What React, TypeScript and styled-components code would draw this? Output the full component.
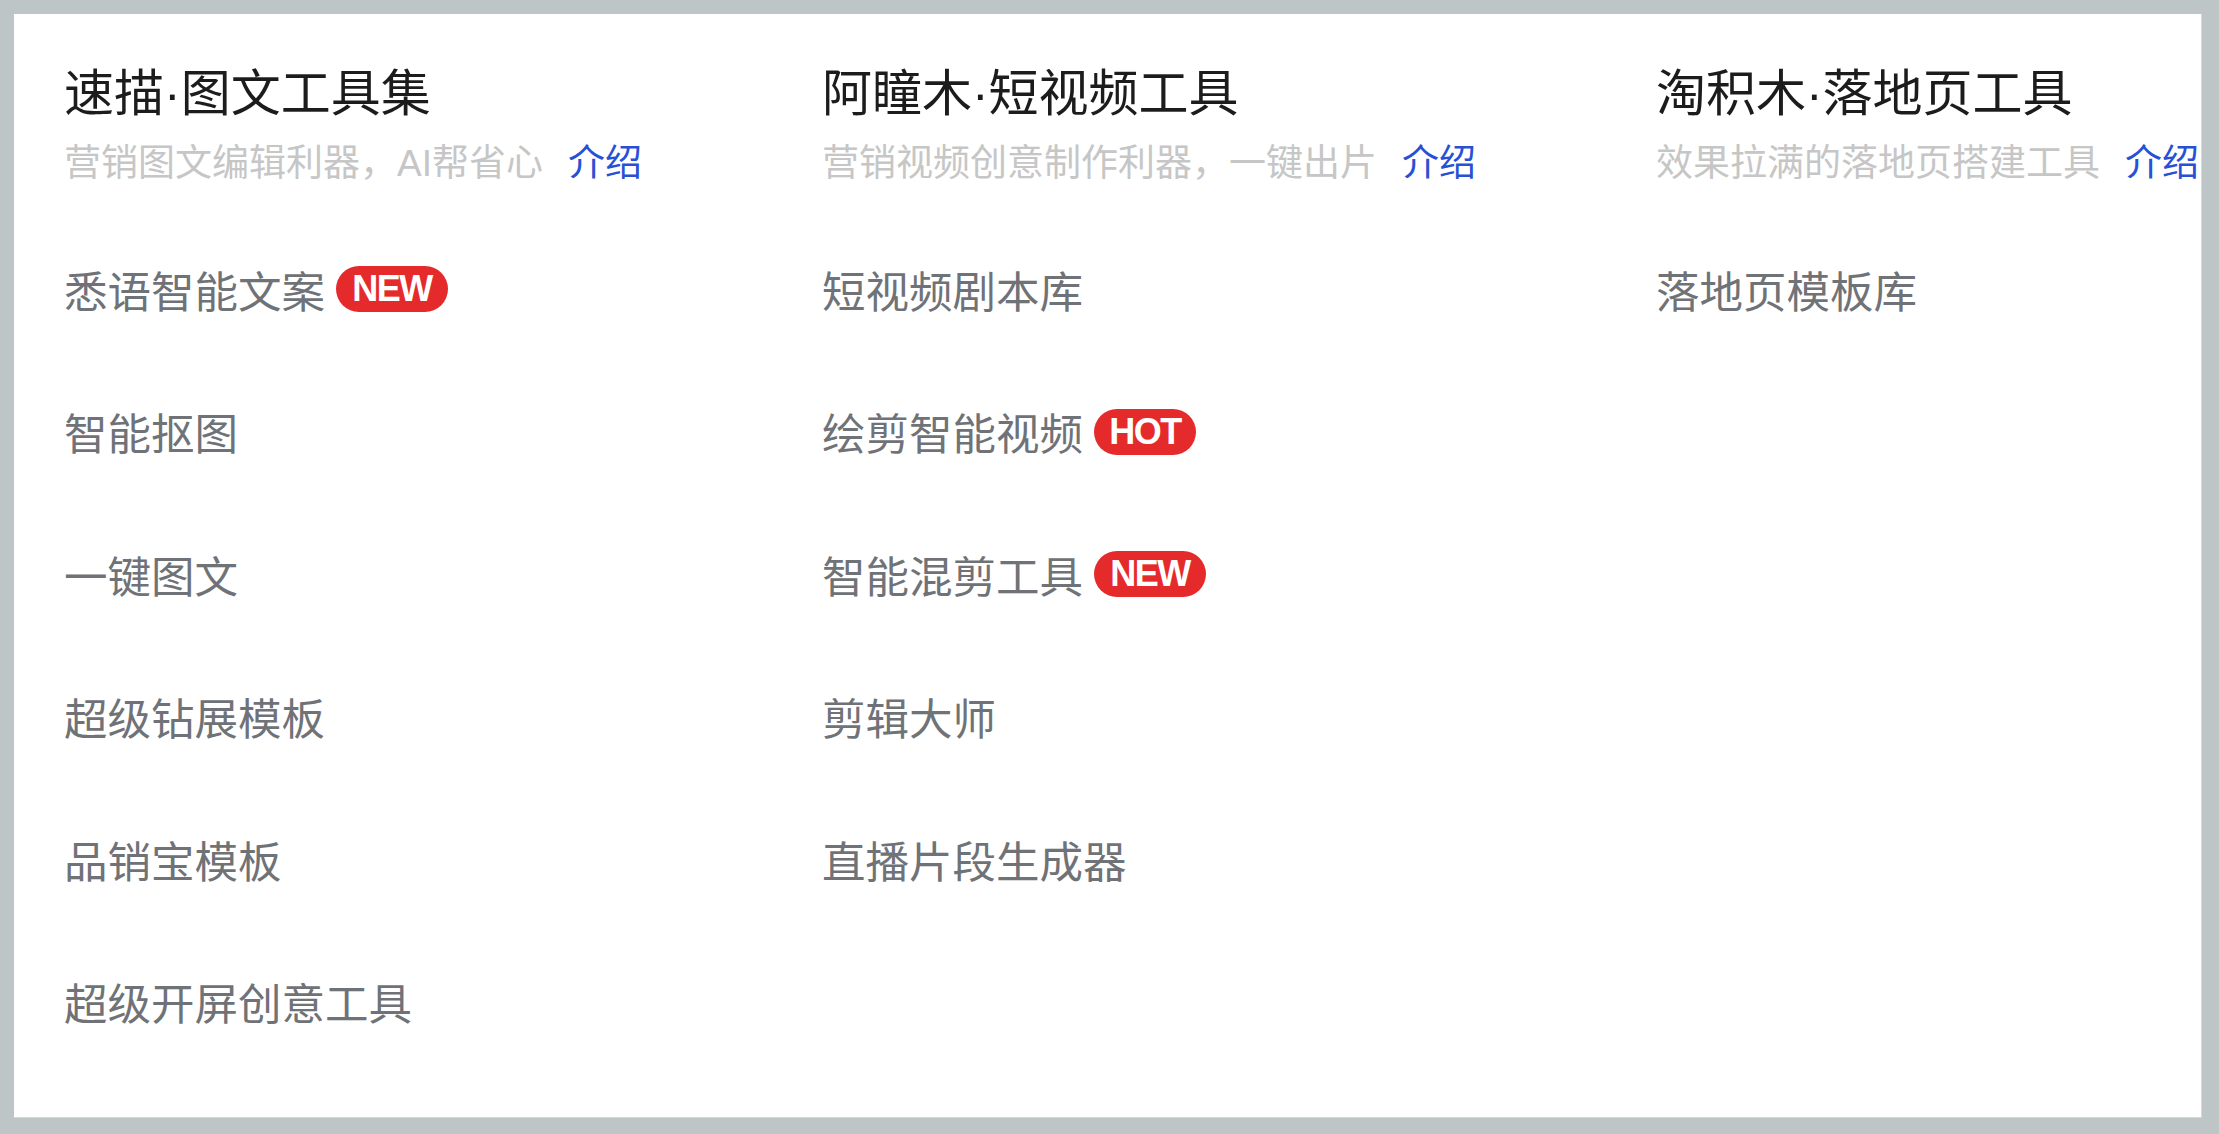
import React from "react";
import styled, { createGlobalStyle } from "styled-components";

const GlobalStyle = createGlobalStyle`
  html, body {
    margin: 0;
    padding: 0;
    background-color: #bec5c7;
  }
  * {
    box-sizing: border-box;
  }
`;

const PageWrapper = styled.div`
  width: 2219px;
  height: 1134px;
  padding: 14px 17px 16px 14px;
`;

const Panel = styled.div`
  width: 100%;
  height: 100%;
  background-color: #fff;
  border-right: 1px solid #d6d8d9;
  border-bottom: 1px solid #d6d8d9;
  overflow: hidden;
  display: flex;
  gap: 180px;
  padding: 50px 0 0 50px;
  font-family: "Liberation Sans", "Noto Sans CJK SC", sans-serif;
`;

const Column = styled.div`
  display: flex;
  flex-direction: column;
  flex-shrink: 0;
  white-space: nowrap;
`;

const Title = styled.div`
  font-size: 50px;
  line-height: 60px;
  color: #1c1c1c;
`;

const SubLine = styled.div`
  display: flex;
  align-items: center;
  margin-top: 11px;
  height: 50px;
`;

const SubText = styled.span`
  font-size: 37px;
  color: #c6c6c6;
`;

const IntroLink = styled.a`
  margin-left: 25px;
  font-size: 37px;
  color: #2750d6;
  text-decoration: none;
  cursor: pointer;
`;

const ItemList = styled.div`
  display: flex;
  flex-direction: column;
  margin-top: 33px;
`;

const Item = styled.div`
  display: flex;
  align-items: center;
  height: 142.5px;
  font-size: 43.5px;
  color: #6f7277;
  cursor: pointer;
`;

const Badge = styled.span<{ $kind: "new" | "hot" }>`
  display: inline-flex;
  align-items: center;
  justify-content: center;
  height: 46px;
  min-width: ${(p) => (p.$kind === "hot" ? "102px" : "112px")};
  margin-left: 11px;
  padding: 0 12px;
  border-radius: 23px;
  background-color: #e52a2b;
  color: #fff;
  font-family: "Liberation Sans", Arial, sans-serif;
  font-weight: 700;
  font-size: 36px;
  letter-spacing: -1.5px;
  line-height: 1;
`;

type Tool = { name: string; tag?: "new" | "hot" };

const groups: { title: string; desc: string; tools: Tool[] }[] = [
  {
    title: "速描·图文工具集",
    desc: "营销图文编辑利器，AI帮省心",
    tools: [
      { name: "悉语智能文案", tag: "new" },
      { name: "智能抠图" },
      { name: "一键图文" },
      { name: "超级钻展模板" },
      { name: "品销宝模板" },
      { name: "超级开屏创意工具" },
    ],
  },
  {
    title: "阿瞳木·短视频工具",
    desc: "营销视频创意制作利器，一键出片",
    tools: [
      { name: "短视频剧本库" },
      { name: "绘剪智能视频", tag: "hot" },
      { name: "智能混剪工具", tag: "new" },
      { name: "剪辑大师" },
      { name: "直播片段生成器" },
    ],
  },
  {
    title: "淘积木·落地页工具",
    desc: "效果拉满的落地页搭建工具",
    tools: [{ name: "落地页模板库" }],
  },
];

export default function App() {
  return (
    <>
      <GlobalStyle />
      <PageWrapper>
        <Panel>
          {groups.map((g) => (
            <Column key={g.title}>
              <Title>{g.title}</Title>
              <SubLine>
                <SubText>{g.desc}</SubText>
                <IntroLink>介绍</IntroLink>
              </SubLine>
              <ItemList>
                {g.tools.map((t) => (
                  <Item key={t.name}>
                    {t.name}
                    {t.tag && (
                      <Badge $kind={t.tag}>{t.tag === "new" ? "NEW" : "HOT"}</Badge>
                    )}
                  </Item>
                ))}
              </ItemList>
            </Column>
          ))}
        </Panel>
      </PageWrapper>
    </>
  );
}
